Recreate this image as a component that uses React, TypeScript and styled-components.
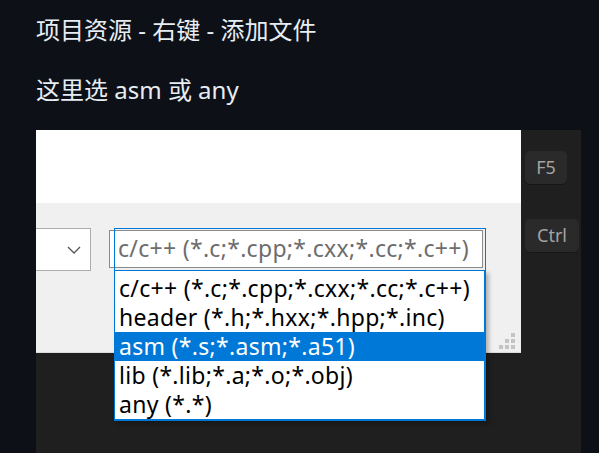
import styled, {createGlobalStyle} from "styled-components";

const GlobalStyle = createGlobalStyle`
    html, body {
        margin: 0;
        padding: 0;
        background: #0d1117;
        overflow: hidden;
    }
`

const fileTypes = [
    "c/c++ (*.c;*.cpp;*.cxx;*.cc;*.c++)",
    "header (*.h;*.hxx;*.hpp;*.inc)",
    "asm (*.s;*.asm;*.a51)",
    "lib (*.lib;*.a;*.o;*.obj)",
    "any (*.*)",
];

// resize grip dots: column, row
const gripDots = [[2, 0], [1, 1], [2, 1], [0, 2], [1, 2], [2, 2]];

function App() {
    return <Page>
        <GlobalStyle/>
        <Line>项目资源 - 右键 - 添加文件</Line>
        <Line second>这里选 asm 或 any</Line>
        <Shot>
            <Dialog>
                <WhiteTop/>
                <GrayPanel>
                    <LeftCombo>
                        <svg width="14" height="8" viewBox="0 0 14 8">
                            <path d="M1 1 L7 7 L13 1" fill="none" stroke="#555" strokeWidth="1.3"/>
                        </svg>
                    </LeftCombo>
                    <TypeCombo>{fileTypes[0]}</TypeCombo>
                    <DropList>
                        {fileTypes.map((t, i) => <Item key={t} selected={i === 2}>{t}</Item>)}
                    </DropList>
                    <Grip width="18" height="18" viewBox="0 0 18 18">
                        {gripDots.map(([c, r]) =>
                            <rect key={`${c}-${r}`} x={c * 6} y={r * 6} width="4" height="4" fill="#c4c4c4"/>)}
                    </Grip>
                </GrayPanel>
            </Dialog>
            <KeyStrip>
                <Key>F5</Key>
                <Key wide>Ctrl</Key>
            </KeyStrip>
        </Shot>
    </Page>
}

export default App;

const Page = styled.div`
    width: 599px;
    height: 453px;
    padding-left: 36px;
    box-sizing: border-box;
    font-family: "Noto Sans", "Noto Sans CJK SC", sans-serif;
`
const Line = styled.div<{ second?: boolean }>`
    color: #e6edf3;
    font-size: 24px;
    line-height: 30px;
    padding-top: ${props => (props.second ? '30px' : '15px')};
    font-family: "Noto Sans", "Noto Sans CJK SC", sans-serif;
`
const Shot = styled.div`
    margin-top: 25px;
    width: 545px;
    height: 340px;
    background: #1f1f1f;
    display: flex;
    align-items: flex-start;
`
const Dialog = styled.div`
    width: 485px;
    display: flex;
    flex-direction: column;
`
const WhiteTop = styled.div`
    height: 73px;
    background: #ffffff;
`
const GrayPanel = styled.div`
    position: relative;
    height: 150px;
    box-sizing: border-box;
    background: #f0f0f0;
    border-bottom: 1px solid #dcdcdc;
    display: flex;
    align-items: flex-start;
    padding-top: 25px;
    gap: 18px;
    font-family: "Noto Sans", sans-serif;
    font-size: 23px;
    letter-spacing: 0.3px;
`
const LeftCombo = styled.div`
    width: 55px;
    height: 43px;
    background: #fff;
    border: 1px solid #adadad;
    border-left: none;
    display: flex;
    align-items: center;
    justify-content: flex-end;
    padding-right: 9px;
    box-sizing: border-box;
`
const TypeCombo = styled.div`
    position: relative;
    width: 374px;
    height: 38px;
    box-sizing: border-box;
    background: #fff;
    border: 1px solid #8a8a8a;
    color: #6d6d6d;
    line-height: 34px;
    padding-left: 8px;
    white-space: nowrap;
    margin-top: 2px;

    &::before {
        content: "";
        position: absolute;
        left: 4px;
        top: -3px;
        right: -4px;
        bottom: -4px;
        border: 1px solid #0078d7;
        border-bottom: none;
        pointer-events: none;
    }
`
const DropList = styled.div`
    position: absolute;
    left: 78px;
    top: 67px;
    width: 372px;
    box-sizing: border-box;
    background: #fff;
    border: 1px solid #0078d7;
    border-width: 1px 2px 2px 1px;
    padding-top: 3px;
    box-shadow: 3px 3px 4px rgba(0, 0, 0, 0.25);
    z-index: 2;
`
const Item = styled.div<{ selected?: boolean }>`
    height: 29px;
    line-height: 28px;
    padding-left: 4px;
    white-space: nowrap;
    color: ${props => (props.selected ? '#fff' : '#000')};
    background: ${props => (props.selected ? '#0078d7' : 'transparent')};
`
const Grip = styled.svg`
    position: absolute;
    right: 4px;
    bottom: 1px;
`
const KeyStrip = styled.div`
    width: 60px;
    padding: 21px 0 0 4px;
    box-sizing: border-box;
    display: flex;
    flex-direction: column;
    align-items: flex-start;
    gap: 35px;
`
const Key = styled.div<{ wide?: boolean }>`
    width: ${props => (props.wide ? '54px' : '42px')};
    height: 33px;
    box-sizing: border-box;
    background: #2a2a2a;
    border-radius: 5px;
    box-shadow: 0 1px 0 #171717;
    color: #a3a3a3;
    font-family: "Noto Sans", sans-serif;
    font-size: 18px;
    line-height: 33px;
    text-align: center;
`
